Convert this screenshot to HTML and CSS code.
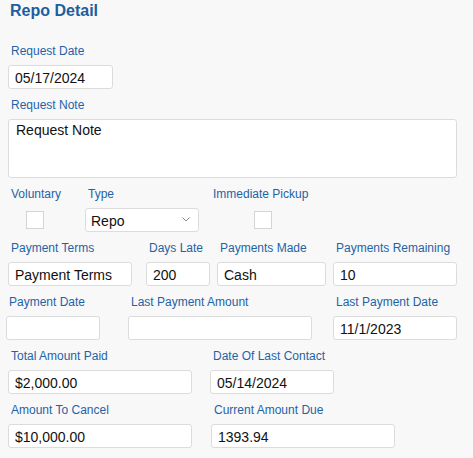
FILE: index.html
```html
<!DOCTYPE html>
<html>
<head>
<meta charset="utf-8">
<link rel="stylesheet" href="styles.css">
</head>
<body>
<div class="page">
  <h1 class="title">Repo Detail</h1>

  <div class="row r1">
    <div class="field w105">
      <label class="lbl">Request Date</label>
      <div class="inp">05/17/2024</div>
    </div>
  </div>

  <div class="row">
    <div class="field w449">
      <label class="lbl">Request Note</label>
      <div class="area">Request Note</div>
    </div>
  </div>

  <div class="row">
    <div class="field w53">
      <label class="lbl">Voluntary</label>
      <div class="chkwrap"><span class="chk"></span></div>
    </div>
    <div class="field w114 ml24">
      <label class="lbl">Type</label>
      <div class="inp sel">Repo
        <svg class="chev" width="8" height="5" viewBox="0 0 8 5"><path d="M0.5 0.5 L4 4 L7.5 0.5" fill="none" stroke="#8a8a8a" stroke-width="1"/></svg>
      </div>
    </div>
    <div class="field w105 ml11">
      <label class="lbl">Immediate Pickup</label>
      <div class="chkwrap"><span class="chk"></span></div>
    </div>
  </div>

  <div class="row">
    <div class="field w124">
      <label class="lbl">Payment Terms</label>
      <div class="inp">Payment Terms</div>
    </div>
    <div class="field w64 ml14">
      <label class="lbl">Days Late</label>
      <div class="inp">200</div>
    </div>
    <div class="field w109 ml7">
      <label class="lbl">Payments Made</label>
      <div class="inp">Cash</div>
    </div>
    <div class="field w124 ml7">
      <label class="lbl">Payments Remaining</label>
      <div class="inp">10</div>
    </div>
  </div>

  <div class="row shift">
    <div class="field w94">
      <label class="lbl">Payment Date</label>
      <div class="inp"></div>
    </div>
    <div class="field w184 ml28">
      <label class="lbl">Last Payment Amount</label>
      <div class="inp"></div>
    </div>
    <div class="field w124 ml21">
      <label class="lbl">Last Payment Date</label>
      <div class="inp">11/1/2023</div>
    </div>
  </div>

  <div class="row">
    <div class="field w184">
      <label class="lbl">Total Amount Paid</label>
      <div class="inp">$2,000.00</div>
    </div>
    <div class="field w124 ml18">
      <label class="lbl">Date Of Last Contact</label>
      <div class="inp">05/14/2024</div>
    </div>
  </div>

  <div class="row">
    <div class="field w184">
      <label class="lbl">Amount To Cancel</label>
      <div class="inp">$10,000.00</div>
    </div>
    <div class="field w184 ml19">
      <label class="lbl">Current Amount Due</label>
      <div class="inp">1393.94</div>
    </div>
  </div>
</div>
</body>
</html>
```

FILE: styles.css
```css
html, body {
  margin: 0;
  padding: 0;
  background: #f8f8f8;
}
body {
  width: 473px;
  height: 458px;
  overflow: hidden;
  font-family: "Liberation Sans", Arial, Helvetica, sans-serif;
}
.page {
  padding: 0 0 0 8px;
}
.title {
  margin: 0;
  padding: 1px 0 0 2px;
  font-size: 16px;
  line-height: 20px;
  font-weight: bold;
  color: #1d5e9e;
}
.row {
  display: flex;
  align-items: flex-start;
  margin-top: 9px;
}
.row.r1 {
  margin-top: 23px;
}
.row.shift {
  margin-left: -2px;
}
.field {
  display: flex;
  flex-direction: column;
}
.lbl {
  display: block;
  padding-left: 3px;
  font-size: 12px;
  line-height: 14px;
  height: 14px;
  margin-bottom: 7px;
  color: #1f63a6;
  white-space: nowrap;
}
.inp {
  box-sizing: border-box;
  height: 24px;
  background: #fff;
  border: 1px solid #dcdcdc;
  border-radius: 3px;
  padding: 2px 6px 0 6px;
  font-size: 14px;
  line-height: 20px;
  color: #111;
  white-space: nowrap;
  overflow: hidden;
  position: relative;
}
.area {
  box-sizing: border-box;
  height: 59px;
  background: #fff;
  border: 1px solid #dcdcdc;
  border-radius: 3px;
  padding: 2px 7px 0 7px;
  font-size: 14px;
  line-height: 16px;
  color: #111;
}
.sel {
  padding-left: 5px;
}
.chev {
  position: absolute;
  right: 8px;
  top: 8px;
}
.chkwrap {
  display: flex;
  justify-content: center;
  padding-top: 3px;
}
.chk {
  display: block;
  box-sizing: border-box;
  width: 18px;
  height: 18px;
  background: #fff;
  border: 1px solid #d4d4d4;
}
.w53 { width: 53px; }
.w64 { width: 64px; }
.w94 { width: 94px; }
.w105 { width: 105px; }
.w109 { width: 109px; }
.w114 { width: 114px; }
.w124 { width: 124px; }
.w184 { width: 184px; }
.w449 { width: 449px; }
.ml7 { margin-left: 7px; }
.ml11 { margin-left: 11px; }
.ml14 { margin-left: 14px; }
.ml18 { margin-left: 18px; }
.ml19 { margin-left: 19px; }
.ml21 { margin-left: 21px; }
.ml24 { margin-left: 24px; }
.ml28 { margin-left: 28px; }
```
